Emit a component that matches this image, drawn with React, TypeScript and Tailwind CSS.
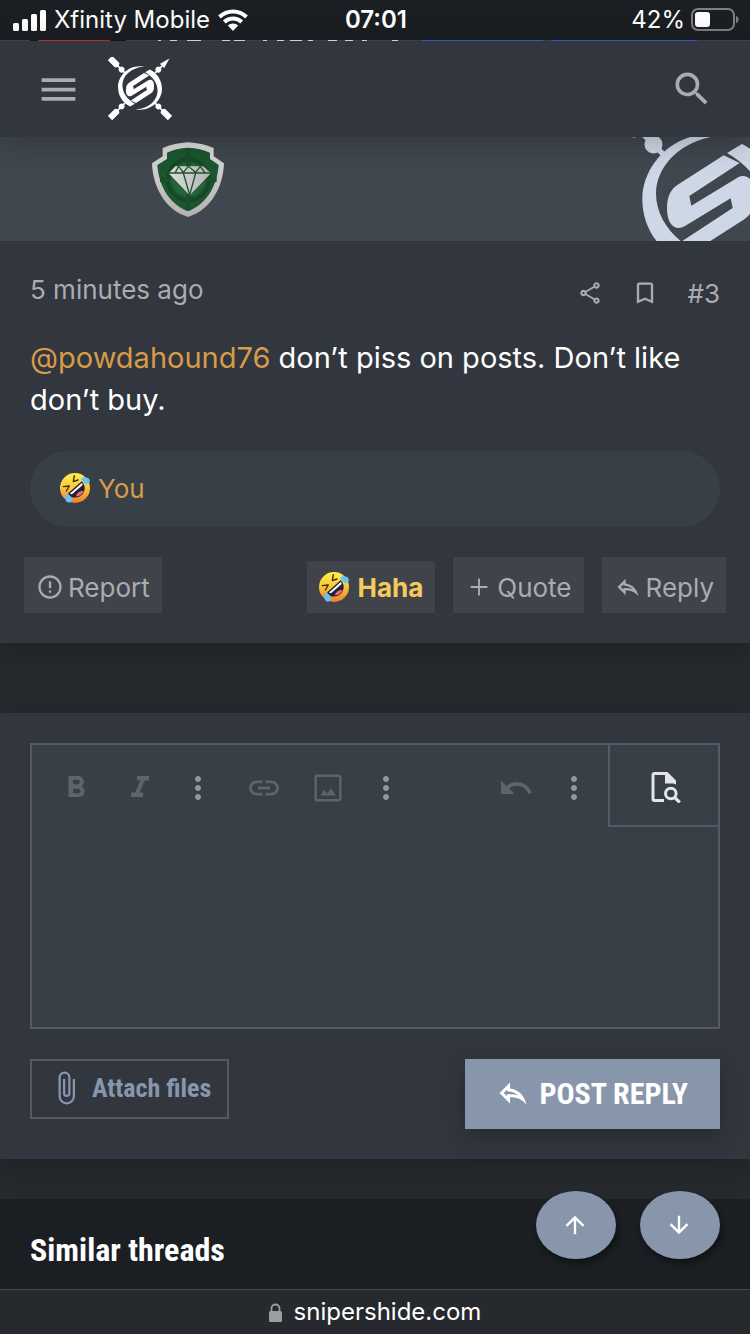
import type { ReactNode } from "react";
import {
  MdArrowDownward,
  MdArrowUpward,
  MdErrorOutline,
  MdMenu,
  MdMoreVert,
  MdSearch,
  MdUndo,
} from "react-icons/md";

type IconProps = {
  path: string;
  className?: string;
};

function Icon({ path, className }: IconProps) {
  return (
    <svg viewBox="0 0 24 24" className={className} fill="currentColor" aria-hidden="true">
      <path d={path} />
    </svg>
  );
}

const paths = {
  share:
    "M18 16.08C17.24 16.08 16.56 16.38 16.04 16.85L8.91 12.7C8.96 12.47 9 12.24 9 12S8.96 11.53 8.91 11.3L15.96 7.19C16.5 7.69 17.21 8 18 8C19.66 8 21 6.66 21 5S19.66 2 18 2 15 3.34 15 5C15 5.24 15.04 5.47 15.09 5.7L8.04 9.81C7.5 9.31 6.79 9 6 9C4.34 9 3 10.34 3 12S4.34 15 6 15C6.79 15 7.5 14.69 8.04 14.19L15.16 18.34C15.11 18.55 15.08 18.77 15.08 19C15.08 20.61 16.39 21.91 18 21.91S20.92 20.61 20.92 19C20.92 17.39 19.61 16.08 18 16.08M18 4C18.55 4 19 4.45 19 5S18.55 6 18 6 17 5.55 17 5 17.45 4 18 4M6 13C5.45 13 5 12.55 5 12S5.45 11 6 11 7 11.45 7 12 6.55 13 6 13M18 20C17.45 20 17 19.55 17 19S17.45 18 18 18 19 18.45 19 19 18.55 20 18 20Z",
  bookmark:
    "M17,18L12,15.82L7,18V5H17M17,3H7A2,2 0 0,0 5,5V21L12,18L19,21V5C19,3.89 18.1,3 17,3Z",
  plus: "M19.2 12.8H12.8V19.2H11.2V12.8H4.8V11.2H11.2V4.8H12.8V11.2H19.2Z",
  reply:
    "M8,9.8V10.7L9.7,11C12.3,11.4 14.2,12.4 15.6,13.7C13.9,13.2 12.1,12.9 10,12.9H8V14.2L5.8,12L8,9.8M10,5L3,12L10,19V14.9C15,14.9 18.5,16.5 21,20C20,15 17,10 10,9",
  bold: "M13.5,15.5H10V12.5H13.5A1.5,1.5 0 0,1 15,14A1.5,1.5 0 0,1 13.5,15.5M10,6.5H13A1.5,1.5 0 0,1 14.5,8A1.5,1.5 0 0,1 13,9.5H10M15.6,10.79C16.57,10.11 17.25,9 17.25,8C17.25,5.74 15.5,4 13.25,4H7V18H14.04C16.14,18 17.75,16.3 17.75,14.21C17.75,12.69 16.89,11.39 15.6,10.79Z",
  italic: "M10,4V7H12.21L8.79,15H6V18H14V15H11.79L15.21,7H18V4H10Z",
  link: "M3.9,12C3.9,10.29 5.29,8.9 7,8.9H11V7H7A5,5 0 0,0 2,12A5,5 0 0,0 7,17H11V15.1H7C5.29,15.1 3.9,13.71 3.9,12M8,13H16V11H8V13M17,7H13V8.9H17C18.71,8.9 20.1,10.29 20.1,12C20.1,13.71 18.71,15.1 17,15.1H13V17H17A5,5 0 0,0 22,12A5,5 0 0,0 17,7Z",
  image:
    "M19.4 4.6V19.4H4.6V4.6H19.4M19.4 3H4.6C3.7 3 3 3.7 3 4.6V19.4C3 20.3 3.7 21 4.6 21H19.4C20.3 21 21 20.3 21 19.4V4.6C21 3.7 20.3 3 19.4 3M13.9 12.2L11.4 15.6L9.4 13.4L6.8 17H17.4L13.9 12.2Z",
  paperclip:
    "M16.5,6V17.5A4,4 0 0,1 12.5,21.5A4,4 0 0,1 8.5,17.5V5A2.5,2.5 0 0,1 11,2.5A2.5,2.5 0 0,1 13.5,5V15.5A1,1 0 0,1 12.5,16.5A1,1 0 0,1 11.5,15.5V6H10V15.5A2.5,2.5 0 0,0 12.5,18A2.5,2.5 0 0,0 15,15.5V5A4,4 0 0,0 11,1A4,4 0 0,0 7,5V17.5A5.5,5.5 0 0,0 12.5,23A5.5,5.5 0 0,0 18,17.5V6H16.5Z",
};

function Logo({ className }: { className: string }) {
  const crescent =
    "M-93 174L-48 147C-120 105 -165 45 -165 -27C-163 -110 -90 -190 40 -201C-110 -225 -206 -110 -206 -10C-206 75 -160 140 -93 174Z";
  const arm = "M200 -8H288L302 -29H398V29H302L288 8H200Z";
  return (
    <svg viewBox="-300 -291 600 600" className={className} fill="currentColor" aria-hidden="true">
      <path d={crescent} />
      <path d={crescent} transform="rotate(180)" />
      <path d="M38 -140L86 -117L-65 -18L-59 11L78 -72C105 -88 132 -70 132 -20C132 20 120 38 100 52L-38 140L-86 117L65 18L59 -11L-78 72C-105 88 -132 70 -132 20C-132 -20 -120 -38 -100 -52Z" />
      {[45, 135, 225].map((angle) => (
        <g key={angle} transform={`rotate(${angle})`}>
          <path d={arm} />
          <circle cx="244" cy="0" r="27" />
        </g>
      ))}
      <g transform="rotate(-45)">
        <path d="M200 -8H295L290 -29L390 0L290 29L295 8H200Z" />
        <circle cx="244" cy="0" r="27" />
      </g>
    </svg>
  );
}

function SupporterBadge() {
  return (
    <svg viewBox="66 35 216 225" className="h-[75px] w-[72px]" role="img" aria-label="Supporter">
      <defs>
        <linearGradient id="rim" x1="0" y1="0" x2="0" y2="1">
          <stop offset="0" stopColor="#dedede" />
          <stop offset="1" stopColor="#b3b0b0" />
        </linearGradient>
        <linearGradient id="gem" x1="0" y1="0" x2="1" y2="0">
          <stop offset="0" stopColor="#dcdcdc" />
          <stop offset="1" stopColor="#b4b4b4" />
        </linearGradient>
      </defs>
      <path
        fill="url(#rim)"
        d="M174 36C202 38 228 43 251 53V78L282 99C280 165 246 238 174 260C102 238 68 165 66 99L98 78V53C121 43 146 38 174 36Z"
      />
      <path
        fill="#1c5630"
        d="M174 52C199 53 221 58 240 67V86L266 104C262 160 235 219 174 243C113 219 86 160 82 104L111 86V67C130 58 150 53 174 52Z"
      />
      <circle cx="175" cy="148" r="62" fill="none" stroke="#174826" strokeWidth="10" />
      <circle cx="175" cy="148" r="51" fill="#25643a" />
      <path stroke="#1a4e2b" strokeWidth="14" d="M175 56V108M175 190V238M90 148H122M228 148H260" />
      <path fill="url(#gem)" d="M136 108H220L243 129L179 195L116 129Z" />
      <path
        fill="none"
        stroke="#1c5630"
        strokeWidth="4"
        d="M116 128H243M136 126L146 108L160 126L175 108L197 126L211 108L224 126M160 128L179 194L197 128"
      />
    </svg>
  );
}

function HahaEmoji() {
  return (
    <svg viewBox="183 96 90 90" className="size-[30px] shrink-0" aria-hidden="true">
      <defs>
        <linearGradient id="face" x1="0" y1="0" x2="0" y2="1">
          <stop offset="0" stopColor="#fdf04c" />
          <stop offset="0.5" stopColor="#fbc638" />
          <stop offset="1" stopColor="#ee7b30" />
        </linearGradient>
      </defs>
      <circle cx="228" cy="141" r="45" fill="url(#face)" />
      <path
        fill="none"
        stroke="#3a2a10"
        strokeWidth="4"
        strokeLinecap="round"
        strokeLinejoin="round"
        d="M193 137L211 135L202 150M226 104L223 122L237 117"
      />
      <path
        fill="#23213a"
        d="M209 155C221 145 236 132 248 121C259 132 260 147 251 159C241 171 222 173 212 165C208 161 207 157 209 155Z"
      />
      <path fill="#fff" d="M213 157C224 148 238 136 248 126C250 128 251 130 251 132L219 160C216 160 214 159 213 157Z" />
      <path fill="#ee6a77" d="M231 166C232 156 243 148 254 150C250 160 242 166 231 166Z" />
      <path fill="#66c3f5" d="M246 113C254 107 266 108 271 115C276 124 268 131 260 128C253 126 250 118 246 113Z" />
      <path fill="#66c3f5" d="M203 157C199 164 197 177 204 183C212 188 221 181 219 173C217 165 209 162 203 157Z" />
    </svg>
  );
}

function StatusBar() {
  return (
    <div className="grid h-10 grid-cols-3 items-center bg-[#1b1e22] pr-[11px] pl-[13px] text-2xl text-white">
      <div className="flex items-center gap-2">
        <svg viewBox="0 0 33 21" className="h-[21px] w-[33px]" fill="currentColor" aria-hidden="true">
          <rect x="0" y="13" width="6" height="8" rx="1.5" />
          <rect x="9" y="9" width="6" height="12" rx="1.5" />
          <rect x="18" y="4" width="6" height="17" rx="1.5" />
          <rect x="27" y="0" width="6" height="21" rx="1.5" />
        </svg>
        <span className="whitespace-nowrap">Xfinity Mobile</span>
        <svg viewBox="0 0 30 22" className="h-[22px] w-[30px]" aria-hidden="true">
          <g fill="none" stroke="#fff" strokeWidth="4">
            <path d="M1.5 8A19.3 19.3 0 0 1 28.5 8" />
            <path d="M6.3 13A12.4 12.4 0 0 1 23.7 13" />
          </g>
          <path fill="#fff" d="M15 22L9.800 16.600A7.500 7.500 0 0 1 20.200 16.600Z" />
        </svg>
      </div>
      <time className="text-center font-semibold">07:01</time>
      <div className="flex items-center justify-end gap-[6px]">
        <span>42%</span>
        <svg viewBox="0 0 48 24" className="h-6 w-12" aria-hidden="true">
          <rect x="1" y="1" width="42" height="21" rx="6" fill="none" stroke="#7d7f82" strokeWidth="2" />
          <rect x="4" y="4" width="15" height="15" rx="3" fill="#fff" />
          <path d="M45 8C48.5 9 48.5 14 45 15Z" fill="#7d7f82" />
        </svg>
      </div>
    </div>
  );
}

// Sliver of the page that shows between the status bar and the sticky header
function ScrolledSliver() {
  return (
    <svg viewBox="0 0 750 1" preserveAspectRatio="none" className="block h-px w-full bg-[#43484e]" aria-hidden="true">
      <path d="M30 0H126V1H30Z" fill="#15171a" />
      <path d="M38 0H110V1H38Z" fill="#c8303c" />
      <path d="M422 0H543V1H422ZM551 0H697V1H551Z" fill="#3f5fd0" />
      <path
        d="M158 .5h3M170 .5h7M187 .5h14M222 .5h8M234 .5h11M263 .5h4M277 .5h7M290 .5h12M308 .5h5M328 .5h9M345 .5h8M362 .5h5M392 .5h6"
        stroke="#e6e6e6"
      />
    </svg>
  );
}

function Header() {
  return (
    <header className="relative z-10 flex h-24 items-center justify-between bg-[#32363e] px-9 text-[#a9acb2] shadow-[0_4px_30px_rgba(0,0,0,0.25)]">
      <div className="flex items-center gap-[27px]">
        <button aria-label="Menu">
          <MdMenu size={45} />
        </button>
        <a href="#home" aria-label="Snipers Hide home" className="text-white">
          <Logo className="size-16" />
        </a>
      </div>
      <button aria-label="Search">
        <MdSearch size={44} />
      </button>
    </header>
  );
}

function ActionButton({ children }: { children: ReactNode }) {
  return (
    <button className="flex h-14 items-center gap-1 bg-[#40444a] px-3 pt-1 text-[#a9acb2]">{children}</button>
  );
}

function Post() {
  return (
    <article className="bg-[#32363e] pb-[30px] shadow-[0_8px_30px_rgba(0,0,0,0.2)]">
      <div className="px-[30px]">
        <div className="flex h-24 items-center justify-between text-[26px] text-[#a9acb2]">
          <a href="#post-3">
            <time>5 minutes ago</time>
          </a>
          <div className="flex items-center gap-7 pt-2">
            <button aria-label="Share">
              <Icon path={paths.share} className="size-[26px]" />
            </button>
            <button aria-label="Bookmark">
              <Icon path={paths.bookmark} className="size-7" />
            </button>
            <a href="#post-3">#3</a>
          </div>
        </div>
        <p className="text-[29px] leading-[42px] text-white">
          <a href="#powdahound76" className="text-[#d69c47]">
            @powdahound76
          </a>{" "}
          don’t piss on posts. Don’t like don’t buy.
        </p>
        <div className="mt-[30px] flex h-[76px] items-center gap-2 rounded-full bg-[#393f47] px-[30px] pb-0.5 text-[26px] text-[#d69c47]">
          <HahaEmoji />
          <a href="#reactions">You</a>
        </div>
      </div>
      <div className="mt-[30px] flex items-end justify-between px-6 text-[26px]">
        <ActionButton>
          <MdErrorOutline size={28} />
          Report
        </ActionButton>
        <div className="flex items-end gap-[18px]">
          <button className="flex h-[52px] items-center gap-2 bg-[#40444a] px-3 font-bold text-[#f8ca5c]">
            <HahaEmoji />
            Haha
          </button>
          <ActionButton>
            <Icon path={paths.plus} className="size-7" />
            Quote
          </ActionButton>
          <ActionButton>
            <Icon path={paths.reply} className="size-7" />
            Reply
          </ActionButton>
        </div>
      </div>
    </article>
  );
}

type ToolProps = {
  label: string;
  children: ReactNode;
};

function Tool({ label, children }: ToolProps) {
  return (
    <button aria-label={label} className="flex w-16 items-center justify-center pt-1 text-[#5f6468]">
      {children}
    </button>
  );
}

function MoreTool({ label }: { label: string }) {
  return (
    <button aria-label={label} className="flex w-[52px] items-center justify-center pt-1 text-[#93969b]">
      <MdMoreVert size={36} />
    </button>
  );
}

function Editor() {
  return (
    <div className="border-2 border-[#555a66] bg-[#393f47]">
      <div className="flex h-[82px] justify-between">
        <div className="flex gap-2 pl-3">
          <div className="flex">
            <Tool label="Bold">
              <Icon path={paths.bold} className="size-9" />
            </Tool>
            <Tool label="Italic">
              <Icon path={paths.italic} className="size-9" />
            </Tool>
            <MoreTool label="More text options" />
          </div>
          <div className="flex">
            <Tool label="Insert link">
              <Icon path={paths.link} className="size-9" />
            </Tool>
            <Tool label="Insert image">
              <Icon path={paths.image} className="size-9" />
            </Tool>
            <MoreTool label="More insert options" />
          </div>
        </div>
        <div className="flex gap-2">
          <div className="flex">
            <Tool label="Undo">
              <MdUndo size={36} />
            </Tool>
            <MoreTool label="More options" />
          </div>
          <button
            aria-label="Preview"
            className="flex w-[110px] items-center justify-center border-b-2 border-l-2 border-[#555a66] pt-1 pl-1 text-[#e4e5e6]"
          >
            {/* page with a magnifier over its corner */}
            <svg viewBox="0 0 30 32" className="h-8 w-[30px]" fill="none" stroke="currentColor" aria-hidden="true">
              <path
                strokeWidth="3"
                strokeLinejoin="round"
                d="M13 29.5H3.5C2.5 29.5 2 29 2 28V4C2 3 2.5 2.5 3.5 2.5H15"
              />
              <path fill="currentColor" stroke="none" d="M14 1H16.5L25 9.5V13.5L22.5 12.5H14Z" />
              <circle cx="19.8" cy="22.5" r="5.3" strokeWidth="3" />
              <path strokeWidth="3.2" d="M23.5 26.3L28.8 31.5" />
            </svg>
          </button>
        </div>
      </div>
      <textarea
        aria-label="Write your reply"
        className="block h-[200px] w-full resize-none bg-transparent px-5 text-[29px] text-white outline-none"
      />
    </div>
  );
}

function ReplyForm() {
  return (
    <form className="mt-[70px] bg-[#32363e] p-[30px] shadow-[0_8px_30px_rgba(0,0,0,0.2)]">
      <Editor />
      <div className="mt-[30px] flex items-start justify-between font-['Roboto_Condensed','Liberation_Sans_Narrow',Roboto,sans-serif] font-bold">
        <button
          type="button"
          className="flex h-[60px] items-center gap-2 border-2 border-[#555a66] px-4 pb-0.5 text-[26px] text-[#8896ac]"
        >
          <Icon path={paths.paperclip} className="size-9" />
          Attach files
        </button>
        <button
          type="button"
          className="flex h-[70px] items-center gap-2 bg-[#8896ac] pr-8 pl-[30px] pb-0.5 text-[30px] text-white uppercase shadow-[0_8px_24px_rgba(0,0,0,0.25)]"
        >
          <Icon path={paths.reply} className="size-9" />
          Post reply
        </button>
      </div>
    </form>
  );
}

function SimilarThreads() {
  return (
    <section className="relative mt-10 flex h-[90px] items-center bg-[#1b1e22] px-[30px] pt-3">
      <h2 className="font-['Roboto_Condensed','Liberation_Sans_Narrow',Roboto,sans-serif] text-[32px] font-bold text-white">
        Similar threads
      </h2>
      <div className="absolute -top-2 right-[30px] flex gap-6 text-white">
        <button
          aria-label="Scroll to top"
          className="flex h-[68px] w-20 items-center justify-center rounded-[50%] bg-[#8896ac] pr-0.5 shadow-[2px_4px_6px_rgba(0,0,0,0.4)]"
        >
          <MdArrowUpward size={28} />
        </button>
        <button
          aria-label="Scroll to bottom"
          className="flex h-[68px] w-20 items-center justify-center rounded-[50%] bg-[#8896ac] pr-0.5 shadow-[2px_4px_6px_rgba(0,0,0,0.4)]"
        >
          <MdArrowDownward size={28} />
        </button>
      </div>
    </section>
  );
}

export default function App() {
  return (
    <div className="overflow-hidden bg-[#26292d] font-[Inter,'Liberation_Sans',sans-serif]">
      <StatusBar />
      <ScrolledSliver />
      <Header />
      <main>
        {/* User banner */}
        <div className="relative flex h-[104px] items-start overflow-hidden bg-[#41474f] pt-[5px] pl-[152px]">
          <SupporterBadge />
          <Logo className="absolute -top-8 -right-[61px] size-[200px] text-[#ced7e6]" />
        </div>
        <Post />
        <ReplyForm />
        <SimilarThreads />
      </main>
      {/* Browser address bar */}
      <footer className="flex h-[45px] items-center justify-center gap-3 border-t border-[#44474c] bg-[#26292e] text-2xl text-white">
        <svg viewBox="0 0 13 19" className="h-[19px] w-[13px]" aria-hidden="true">
          <rect x="0" y="8" width="13" height="11" rx="1.5" fill="#9b9da3" />
          <path d="M2.5 9V5.5A4 4 0 0 1 10.5 5.5V9" fill="none" stroke="#9b9da3" strokeWidth="1.8" />
        </svg>
        snipershide.com
      </footer>
    </div>
  );
}
